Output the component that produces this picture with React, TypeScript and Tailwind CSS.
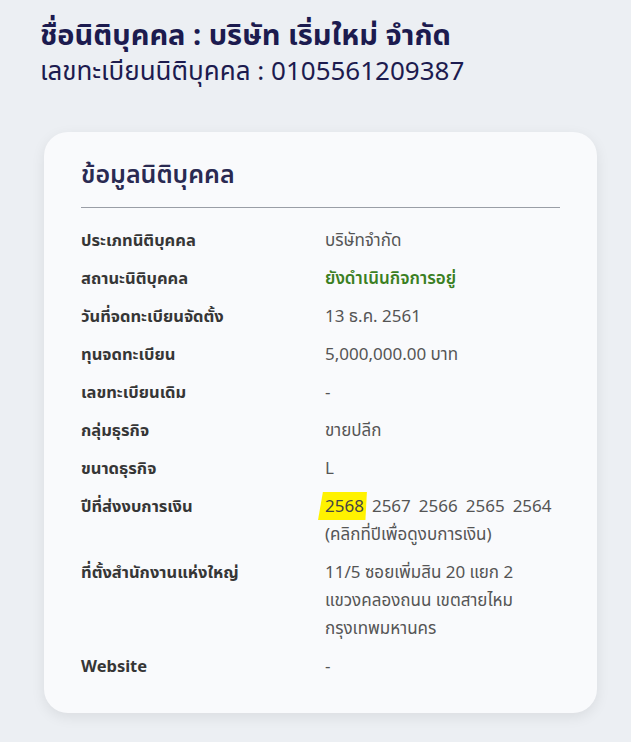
import React from 'react';

const rows: { label: string; value: React.ReactNode }[] = [
    { label: 'ประเภทนิติบุคคล', value: 'บริษัทจำกัด' },
    { label: 'สถานะนิติบุคคล', value: <span className="text-[#3b7f23] font-semibold">ยังดำเนินกิจการอยู่</span> },
    { label: 'วันที่จดทะเบียนจัดตั้ง', value: '13 ธ.ค. 2561' },
    { label: 'ทุนจดทะเบียน', value: '5,000,000.00 บาท' },
    { label: 'เลขทะเบียนเดิม', value: '-' },
    { label: 'กลุ่มธุรกิจ', value: 'ขายปลีก' },
    { label: 'ขนาดธุรกิจ', value: 'L' },
];

const years = ['2568', '2567', '2566', '2565', '2564'];

const Row: React.FC<{ label: string; children: React.ReactNode }> = ({ label, children }) => (
    <div className="flex">
        <div className="w-[244px] shrink-0 font-bold text-[16.5px] text-[#363636]">{label}</div>
        <div className="flex-1 text-[17px] text-[#555]">{children}</div>
    </div>
);

export default function App() {
    return (
        <div className="min-h-[742px] bg-[#eceff3] pl-[40px] pt-[12px] font-['Noto_Sans','Noto_Sans_Thai',sans-serif]">
            <h1 className="text-[29px] font-bold leading-[44px] text-[#1c1b4f]">ชื่อนิติบุคคล : บริษัท เริ่มใหม่ จำกัด</h1>
            <div className="mt-[-6px] text-[26px] leading-[40px] text-[#1c1b4f]">เลขทะเบียนนิติบุคคล : 0105561209387</div>

            <div className="mt-[42px] ml-[4px] w-[553px] rounded-[24px] bg-[#f9fafc] shadow-[0_4px_14px_rgba(0,0,0,0.08)] px-[37px] pt-[23px] pb-[33px]">
                <h2 className="text-[25px] font-semibold leading-[36px] text-[#2a2a52]">ข้อมูลนิติบุคคล</h2>
                <div className="mt-[16px] border-t border-[#9a9ea6]" />
                <div className="mt-[18px] flex flex-col gap-[10px] leading-[28px]">
                    {rows.map((r) => (
                        <Row key={r.label} label={r.label}>{r.value}</Row>
                    ))}
                    <Row label="ปีที่ส่งงบการเงิน">
                        <div className="flex gap-[8px]">
                            {years.map((y, i) => (
                                <span
                                    key={y}
                                    className={i === 0 ? 'bg-[#fff200] pl-[7px] pr-[3px] -ml-[7px] -mr-[3px] text-[#444] [clip-path:polygon(10%_0,100%_0,97%_100%,0_100%)]' : ''}
                                >
                                    {y}
                                </span>
                            ))}
                        </div>
                        <div>(คลิกที่ปีเพื่อดูงบการเงิน)</div>
                    </Row>
                    <Row label="ที่ตั้งสำนักงานแห่งใหญ่">
                        <div>11/5 ซอยเพิ่มสิน 20 แยก 2</div>
                        <div>แขวงคลองถนน เขตสายไหม</div>
                        <div>กรุงเทพมหานคร</div>
                    </Row>
                    <Row label="Website">-</Row>
                </div>
            </div>
        </div>
    );
}
